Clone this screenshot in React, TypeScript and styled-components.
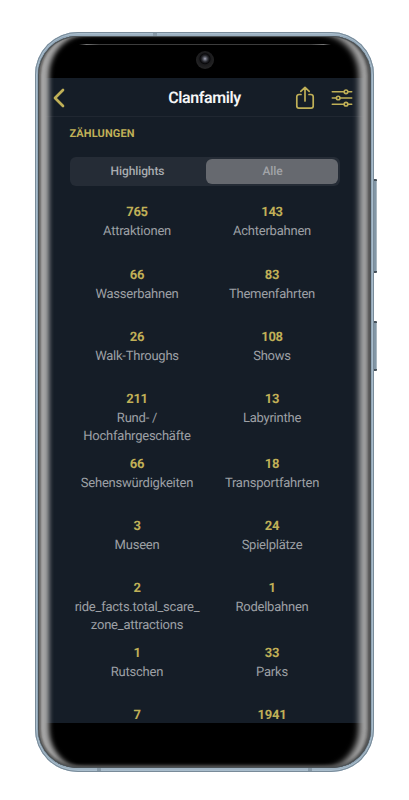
import React from "react";
import styled, { createGlobalStyle } from "styled-components";

const GlobalStyle = createGlobalStyle`
  * { box-sizing: border-box; }
  html, body { margin: 0; background: #fff; overflow: hidden; }
  body {
    font-family: Roboto, "Noto Sans", sans-serif;
    text-rendering: geometricPrecision;
  }
`;

const gold = "#c0b057";

const Page = styled.main`
  width: 409px;
  height: 800px;
  padding: 32px 0 0 35px;
  background: #fff;
`;

const Phone = styled.div`
  position: relative;
  width: 339px;
  height: 740px;
  padding: 4px 3px;
  border-radius: 43px;
  background: linear-gradient(180deg, #a9bccb 0, #93a8b9 5px, #90a5b5 730px, #a9bccb 100%);
  box-shadow: inset 0 0 0 1px #798b99, inset 0 0 0 2px #a9bdcc;
`;

const SideKey = styled.div<{ $top: number; $height: number }>`
  position: absolute;
  left: 339px;
  top: ${(p) => p.$top}px;
  width: 3px;
  height: ${(p) => p.$height}px;
  border-top: 2px solid #46515a;
  border-bottom: 2px solid #46515a;
  border-radius: 0 1px 1px 0;
  background: linear-gradient(90deg, #8296a5 0 1.5px, #bcc6cc 3px);
`;

const AntennaMark = styled.div<{ $left: number; $bottom?: boolean }>`
  position: absolute;
  left: ${(p) => p.$left}px;
  ${(p) => (p.$bottom ? "bottom: 1px;" : "top: 1px;")}
  width: 4px;
  height: 3px;
  background: #8799a7;
`;

const Glass = styled.div`
  position: relative;
  height: 732px;
  padding: 42px 7px 0;
  border-radius: 39px;
  background: #000;
  overflow: hidden;
`;

const GlassEdge = styled.div`
  position: absolute;
  inset: 0;
  border-radius: 39px;
  pointer-events: none;
  box-shadow:
    inset 0 0 0 1px #4b5256,
    inset 4px 0 2px -1px #6b6967,
    inset -4px 0 2px -1px #555,
    inset -7px 0 3px -2px #808080,
    inset 0 -4px 3px -1px #505050,
    inset 14px 0 5px -3px #a6a6a6,
    inset -15px 0 6px -3px #a6a6a6;
`;

const Speaker = styled.div`
  position: absolute;
  top: 8px;
  left: 41px;
  width: 252px;
  height: 1px;
  background: linear-gradient(90deg, transparent, #777 3%, #3d3d3d 8% 92%, #777 97%, transparent);
`;

const Camera = styled.div`
  position: absolute;
  left: 157.5px;
  top: 15px;
  width: 18px;
  height: 18px;
  border-radius: 50%;
  background: radial-gradient(circle at 50% 43%, #aab 0, #626570 1.5px, #292a30 3.2px, #08080a 5px, #1a1a1c 6px, #232324 9px);
`;

const Screen = styled.section`
  height: 644.6px;
  background: #151d27;
  overflow: hidden;
`;

const Toolbar = styled.header`
  display: flex;
  align-items: center;
  height: 39px;
  padding: 1px 11px 0 8px;
  border-bottom: 1px solid #202731;
`;

const ToolbarSide = styled.div<{ $end?: boolean }>`
  display: flex;
  flex: 1;
  align-items: center;
  justify-content: ${(p) => (p.$end ? "flex-end" : "flex-start")};
  gap: 16.5px;
`;

const IconButton = styled.button`
  display: flex;
  padding: 0;
  border: 0;
  background: none;
  color: ${gold};
`;

const Icon = styled.svg`
  display: block;
  fill: none;
  stroke: currentColor;
  stroke-linecap: round;
  stroke-linejoin: round;
`;

const Title = styled.h1`
  margin: 0 0 0 3px;
  color: #f4f5f6;
  font-size: 16px;
  font-weight: 600;
  line-height: 20px;
  letter-spacing: -0.42px;
`;

const Content = styled.div`
  padding: 7.6px 24.5px 0;
`;

const SectionTitle = styled.h2`
  margin: 0;
  color: ${gold};
  font-size: 11px;
  font-weight: 700;
  line-height: 18px;
  letter-spacing: 0.1px;
`;

const Segments = styled.div`
  display: grid;
  grid-template-columns: 1fr 1fr;
  height: 29px;
  margin: 14.4px 0 17.5px;
  border-radius: 6px;
  background: #252c36;
`;

const Segment = styled.button<{ $active?: boolean }>`
  margin: 2px 1.5px;
  border: 0;
  padding: 0 0 1px 1px;
  border-radius: 6px;
  background: ${(p) => (p.$active ? "#66696f" : "transparent")};
  color: ${(p) => (p.$active ? "#a2a4a8" : "#a9acb0")};
  font: 500 12px/20px Roboto, sans-serif;
  letter-spacing: -0.1px;
  text-rendering: inherit;
`;

const Stats = styled.div`
  display: grid;
  grid-template-columns: 1fr 1fr;
`;

const Stat = styled.div`
  min-height: 62.3px;
  padding-bottom: 9.5px;
  text-align: center;
`;

const Count = styled.div`
  color: ${gold};
  font-size: 13px;
  font-weight: 700;
  line-height: 20px;
  letter-spacing: -0.25px;
`;

const Label = styled.div`
  color: #9da0a5;
  font-size: 13px;
  line-height: 17.5px;
  letter-spacing: -0.23px;
  white-space: pre-line;
`;

const stats: [string, string][] = [
  ["765", "Attraktionen"],
  ["143", "Achterbahnen"],
  ["66", "Wasserbahnen"],
  ["83", "Themenfahrten"],
  ["26", "Walk-Throughs"],
  ["108", "Shows"],
  ["211", "Rund- /\nHochfahrgeschäfte"],
  ["13", "Labyrinthe"],
  ["66", "Sehenswürdigkeiten"],
  ["18", "Transportfahrten"],
  ["3", "Museen"],
  ["24", "Spielplätze"],
  ["2", "ride_facts.total_scare_\nzone_attractions"],
  ["1", "Rodelbahnen"],
  ["1", "Rutschen"],
  ["33", "Parks"],
  ["7", ""],
  ["1941", ""],
];

const BackIcon = () => (
  <Icon width="12" height="20" viewBox="0 0 12 20" strokeWidth="2.7">
    <path d="M10 2 2 10l8 8" />
  </Icon>
);

const ShareIcon = () => (
  <Icon width="20" height="24" viewBox="0 0 20 24" strokeWidth="1.7">
    <path d="M6 8.5H4A2.2 2.2 0 0 0 1.8 10.7V20A2.2 2.2 0 0 0 4 22.2H16A2.2 2.2 0 0 0 18.2 20V10.7A2.2 2.2 0 0 0 16 8.5H14M10 15V1.5M5.8 5.4 10 1.3l4.2 4.1" />
  </Icon>
);

const SlidersIcon = () => (
  <Icon width="22" height="18" viewBox="0 0 22 18" strokeWidth="1.6">
    <path d="M1.3 2.8H13M17 2.8H20.7M1.3 9H5.2M9.2 9H20.7M1.3 15.2H13M17 15.2H20.7" />
    <circle cx="15" cy="2.8" r="1.8" />
    <circle cx="7.2" cy="9" r="1.8" />
    <circle cx="15" cy="15.2" r="1.8" />
  </Icon>
);

export default function App() {
  return (
    <Page>
      <GlobalStyle />
      <Phone>
        <SideKey $top={147} $height={94} />
        <SideKey $top={289} $height={50} />
        <AntennaMark $left={118} />
        <AntennaMark $left={62} $bottom />
        <AntennaMark $left={273} $bottom />
        <Glass>
          <Screen>
            <Toolbar>
              <ToolbarSide>
                <IconButton aria-label="Zurück"><BackIcon /></IconButton>
              </ToolbarSide>
              <Title>Clanfamily</Title>
              <ToolbarSide $end>
                <IconButton aria-label="Teilen"><ShareIcon /></IconButton>
                <IconButton aria-label="Filter"><SlidersIcon /></IconButton>
              </ToolbarSide>
            </Toolbar>
            <Content>
              <SectionTitle>ZÄHLUNGEN</SectionTitle>
              <Segments>
                <Segment>Highlights</Segment>
                <Segment $active>Alle</Segment>
              </Segments>
              <Stats>
                {stats.map(([count, label], i) => (
                  <Stat key={i}>
                    <Count>{count}</Count>
                    <Label>{label}</Label>
                  </Stat>
                ))}
              </Stats>
            </Content>
          </Screen>
          <GlassEdge />
          <Speaker />
          <Camera />
        </Glass>
      </Phone>
    </Page>
  );
}
